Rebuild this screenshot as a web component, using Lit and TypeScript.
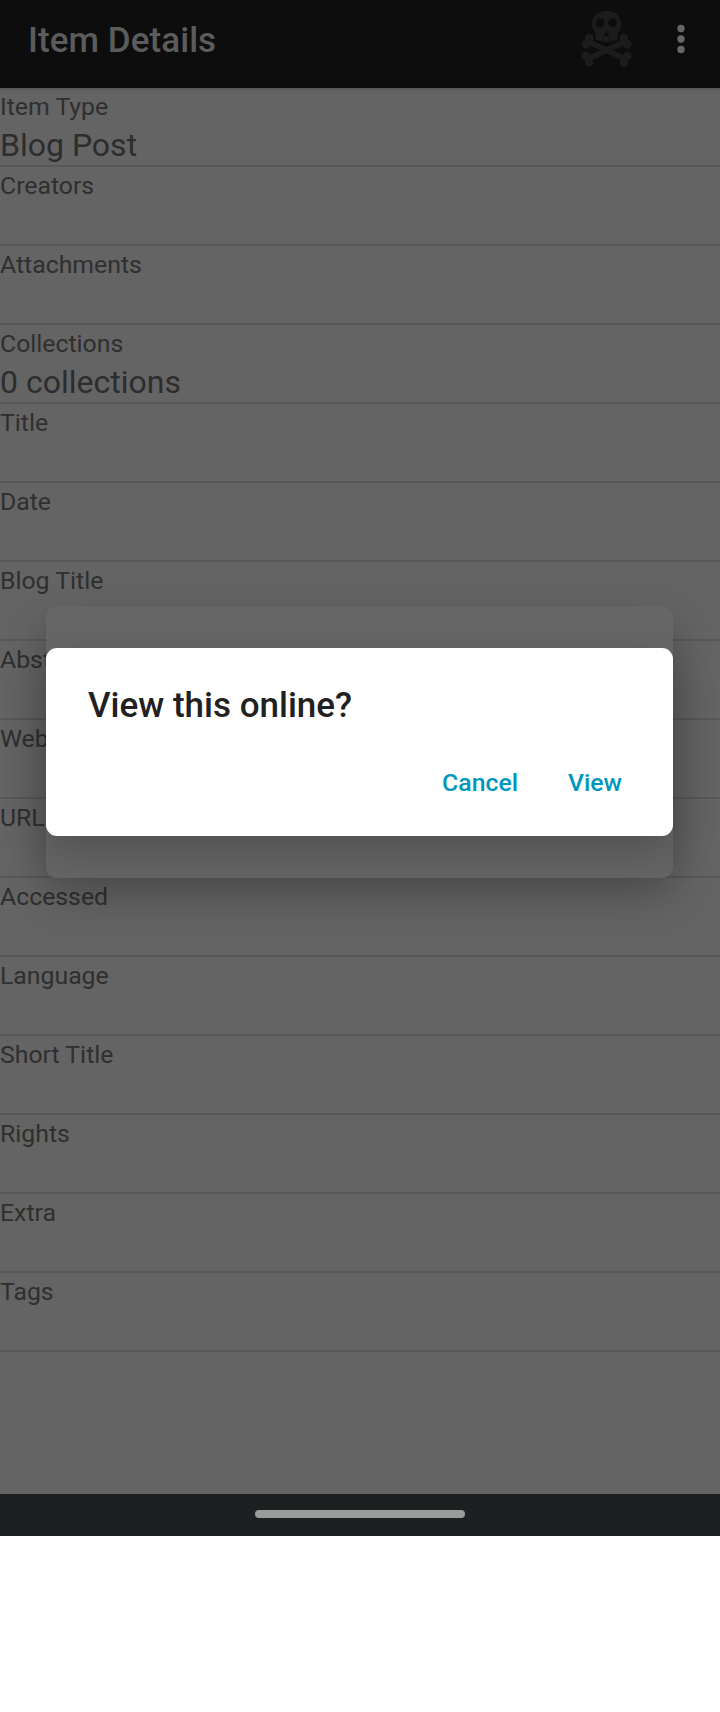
import { LitElement, html, css } from "lit";
import { customElement } from "lit/decorators.js";

const FIELDS: [string, string][] = [
  ["Item Type", "Blog Post"],
  ["Creators", ""],
  ["Attachments", ""],
  ["Collections", "0 collections"],
  ["Title", ""],
  ["Date", ""],
  ["Blog Title", ""],
  ["Abstract", ""],
  ["Website Type", ""],
  ["URL", ""],
  ["Accessed", ""],
  ["Language", ""],
  ["Short Title", ""],
  ["Rights", ""],
  ["Extra", ""],
  ["Tags", ""],
];

@customElement("app-root")
export class AppRoot extends LitElement {
  static styles = css`
    :host {
      display: flex;
      flex-direction: column;
      position: relative;
      width: 720px;
      height: 1712px;
      overflow: hidden;
      background: #fff;
      font-family: Roboto, "Noto Sans", sans-serif;
    }
    .bar {
      box-sizing: border-box;
      flex: none;
      height: 88px;
      display: flex;
      align-items: center;
      padding: 0 32px 10px 28px;
      background: #0d0d0d;
      box-shadow: 0 1px 3px rgba(0, 0, 0, 0.2);
      z-index: 1;
    }
    .heading {
      flex: 1;
      margin: 0;
      padding-top: 4px;
      font-size: 35px;
      line-height: 40px;
      font-weight: 500;
      letter-spacing: 0.06px;
      color: #5c5c5c;
    }
    .skull {
      width: 60px;
      height: 66px;
      margin: -2px 38px 0 0;
    }
    .dots {
      width: 14px;
      height: 32px;
    }
    .list {
      flex: none;
      height: 1406px;
      background: #646464;
    }
    .row {
      height: 77px;
      border-bottom: 2px solid #585858;
      white-space: nowrap;
    }
    .label {
      padding-top: 4px;
      font-size: 24.8px;
      line-height: 29px;
      color: #2f2f2f;
    }
    .value {
      padding-top: 5px;
      font-size: 32px;
      line-height: 38px;
      color: #2d2d2d;
    }
    .nav {
      flex: none;
      height: 42px;
      display: flex;
      justify-content: center;
      align-items: center;
      padding-bottom: 2px;
      box-sizing: border-box;
      background: #1c2020;
    }
    .handle {
      width: 210px;
      height: 8px;
      border-radius: 4px;
      background: #999c9b;
    }
    .backdrop {
      position: absolute;
      left: 46px;
      top: 606px;
      width: 627px;
      height: 272px;
      border-radius: 11px;
      background: #666;
      box-shadow: 0 18px 44px rgba(0, 0, 0, 0.24);
    }
    .dialog {
      position: absolute;
      left: 46px;
      top: 648px;
      width: 627px;
      height: 188px;
      box-sizing: border-box;
      padding: 37px 51px 0 42px;
      border-radius: 11px;
      background: #fff;
      box-shadow: 0 18px 44px rgba(0, 0, 0, 0.2);
    }
    .question {
      margin: 0;
      font-size: 35px;
      line-height: 41px;
      font-weight: 500;
      color: #212121;
    }
    .actions {
      display: flex;
      justify-content: flex-end;
      gap: 50px;
      margin-top: 42px;
      font-size: 24.8px;
      line-height: 29px;
      font-weight: 500;
      color: #0097bd;
    }
  `;

  render() {
    return html`
      <header class="bar">
        <h1 class="heading">Item Details</h1>
        <svg class="skull" viewBox="0 0 60 66">
          <g fill="#1c1c1c">
            <path
              d="M30.500 5.800C22 5.800 16 11.500 16 19C16 23 17.200 25.500 19.500 27.500V32.500C19.500 35 22 36.500 24.500 35.500C25.500 37.500 35.500 37.500 36.500 35.500C39 36.500 41.500 35 41.500 32.500V27.500C43.800 25.500 45.200 23 45.200 19C45.200 11.500 39 5.800 30.500 5.800Z"
            />
            <circle cx="13.200" cy="33" r="4.300" />
            <circle cx="9.800" cy="39.200" r="4.300" />
            <circle cx="48" cy="33" r="4.300" />
            <circle cx="51.400" cy="39.200" r="4.300" />
            <circle cx="9.800" cy="50.800" r="4.300" />
            <circle cx="13.200" cy="57.500" r="4.300" />
            <circle cx="51.400" cy="50.800" r="4.300" />
            <circle cx="48" cy="57.500" r="4.300" />
          </g>
          <path d="M12 36.500L49 54M49 36.500L12 54" stroke="#1c1c1c" stroke-width="5.500" />
          <g fill="#0d0d0d">
            <circle cx="24" cy="17.800" r="4.500" />
            <circle cx="36.500" cy="17.800" r="4.500" />
            <path d="M30.300 25L33 31.500H27.600Z" />
            <path d="M27.500 33.800V36.500M33.300 33.800V36.500" stroke="#0d0d0d" stroke-width="0.800" />
          </g>
        </svg>
        <svg class="dots" viewBox="0 0 14 32" fill="#666">
          <circle cx="7" cy="5.500" r="3.700" />
          <circle cx="7" cy="16" r="3.700" />
          <circle cx="7" cy="26.500" r="3.700" />
        </svg>
      </header>
      <main class="list">
        ${FIELDS.map(
          ([label, value]) => html`
            <div class="row">
              <div class="label">${label}</div>
              <div class="value">${value}</div>
            </div>
          `
        )}
      </main>
      <footer class="nav"><div class="handle"></div></footer>
      <div class="backdrop"></div>
      <section class="dialog">
        <h2 class="question">View this online?</h2>
        <div class="actions"><span>Cancel</span><span>View</span></div>
      </section>
    `;
  }
}
